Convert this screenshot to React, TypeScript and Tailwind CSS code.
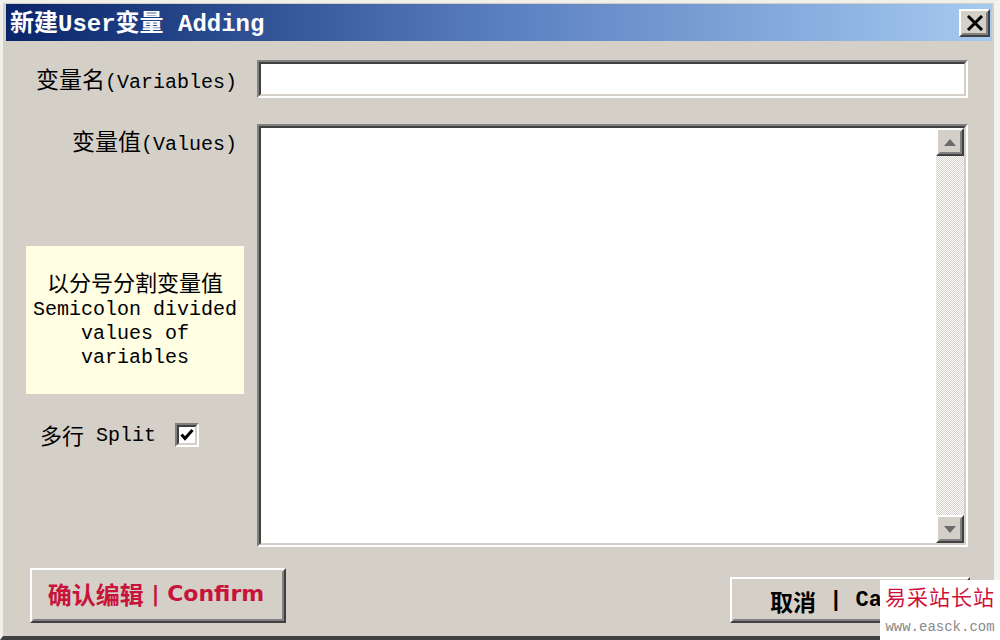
import React from "react";

const CJK = "'Noto Sans CJK SC', sans-serif";
const MONO = "'Liberation Mono', 'Noto Sans CJK SC', monospace";

function Sunken({ className, innerClass, children }: { className?: string; innerClass?: string; children?: React.ReactNode }) {
  return (
    <div className={`border-2 border-t-[#808080] border-l-[#808080] border-b-white border-r-white ${className ?? ""}`}>
      <div className={`h-full w-full border-2 border-t-[#404040] border-l-[#404040] border-b-[#d4d0c8] border-r-[#d4d0c8] ${innerClass ?? ""}`}>
        {children}
      </div>
    </div>
  );
}

function Raised({ className, innerClass, children }: { className?: string; innerClass?: string; children?: React.ReactNode }) {
  return (
    <div className={`border-2 border-t-white border-l-white border-b-[#404040] border-r-[#404040] bg-[#d4d0c8] ${className ?? ""}`}>
      <div className={`h-full w-full border-2 border-t-[#d4d0c8] border-l-[#d4d0c8] border-b-[#808080] border-r-[#808080] ${innerClass ?? ""}`}>
        {children}
      </div>
    </div>
  );
}

export default function App() {
  return (
    <div className="relative w-[1000px] h-[640px] overflow-hidden bg-[#d4d0c8]">
      <div className="flex flex-col w-full h-full border-l-[3px] border-t-[3px] border-l-[#f0efea] border-t-[#f0efea] border-r-[6px] border-r-[#f4f3ef] border-b-[4px] border-b-[#404040] pl-[3px] pt-[1px] pr-[2px]">
        {/* Title bar */}
        <div className="flex items-center h-[37px] bg-gradient-to-r from-[#0a246a] via-[#5a7fc0] to-[#a6caf0] pl-[4px] pr-[2px]">
          <div className="flex items-baseline text-white font-bold leading-none" style={{ fontFamily: MONO }}>
            <span className="text-[24px]" style={{ fontFamily: CJK }}>新建</span>
            <span className="text-[24px]">User</span>
            <span className="text-[24px]" style={{ fontFamily: CJK }}>变量</span>
            <span className="text-[24px]">&nbsp;Adding</span>
          </div>
          <div className="flex-1" />
          <Raised className="w-[31px] h-[28px]" innerClass="flex items-center justify-center">
            <svg width="18" height="16" viewBox="0 0 18 16">
              <path d="M2 1 L16 15 M16 1 L2 15" stroke="#000" strokeWidth="3" />
            </svg>
          </Raised>
        </div>

        {/* Body */}
        <div className="flex flex-col flex-1 pr-[24px]">
          {/* Row 1 */}
          <div className="flex items-center mt-[19px] h-[38px]">
            <div className="w-[251px] flex justify-end pr-[20px] items-baseline text-black">
              <span className="text-[23px]" style={{ fontFamily: CJK }}>变量名</span>
              <span className="text-[20px]" style={{ fontFamily: MONO }}>(Variables)</span>
            </div>
            <Sunken className="flex-1 h-[38px]" innerClass="bg-white" />
          </div>

          {/* Row 2 */}
          <div className="flex mt-[26px] h-[423px]">
            <div className="w-[251px] flex flex-col">
              <div className="flex justify-end pr-[20px] items-baseline mt-[-1px] text-black">
                <span className="text-[23px]" style={{ fontFamily: CJK }}>变量值</span>
                <span className="text-[20px]" style={{ fontFamily: MONO }}>(Values)</span>
              </div>
              <div className="ml-[20px] mr-[13px] mt-[86px] h-[148px] bg-[#fffde2] flex flex-col items-center justify-center text-black pb-[2px]">
                <div className="text-[22px] leading-[26px]" style={{ fontFamily: CJK }}>以分号分割变量值</div>
                <div className="text-[20px] leading-[24px] mt-[4px] text-center" style={{ fontFamily: MONO }}>
                  Semicolon divided
                  <br />
                  values of
                  <br />
                  variables
                </div>
              </div>
              <div className="flex items-center ml-[34px] mt-[24px] text-black">
                <span className="text-[22px]" style={{ fontFamily: CJK }}>多行</span>
                <span className="text-[20px] pt-[3px]" style={{ fontFamily: MONO }}>&nbsp;Split&nbsp;</span>
                <Sunken className="w-[24px] h-[24px] ml-[7px]" innerClass="bg-white flex items-center justify-center">
                  <svg width="14" height="14" viewBox="0 0 14 14">
                    <path d="M1.5 6.5 L5 10.5 L12.5 2" stroke="#000" strokeWidth="3" fill="none" />
                  </svg>
                </Sunken>
              </div>
            </div>
            <Sunken className="flex-1 h-full" innerClass="bg-white flex justify-end">
              <div className="w-[28px] h-full flex flex-col bg-[repeating-conic-gradient(#d4d0c8_0%_25%,#ffffff_0%_50%)] bg-[length:2px_2px]">
                <Raised className="w-[28px] h-[28px]" innerClass="flex items-center justify-center">
                  <svg width="12" height="7" viewBox="0 0 12 7"><path d="M6 0 L12 7 L0 7 Z" fill="#6b6b6b" /></svg>
                </Raised>
                <div className="flex-1" />
                <Raised className="w-[28px] h-[28px]" innerClass="flex items-center justify-center">
                  <svg width="12" height="7" viewBox="0 0 12 7"><path d="M0 0 L12 0 L6 7 Z" fill="#6b6b6b" /></svg>
                </Raised>
              </div>
            </Sunken>
          </div>

          {/* Buttons */}
          <div className="flex items-end justify-between mt-[21px] pl-[24px]">
            <Raised className="w-[256px] h-[55px]" innerClass="flex items-center justify-center pb-[4px] pr-[4px]">
              <div className="flex items-center font-bold text-[#c8143c] leading-none">
                <span className="text-[24px]" style={{ fontFamily: CJK }}>确认编辑</span>
                <span className="text-[22px]" style={{ fontFamily: "'DejaVu Sans', sans-serif" }}>&nbsp;| Confirm</span>
              </div>
            </Raised>
            <Raised className="w-[240px] h-[46px] mr-[-2px]" innerClass="flex items-center pl-[36px] pt-[2px]">
              <div className="flex items-center text-black font-bold leading-none">
                <span className="text-[23px]" style={{ fontFamily: CJK }}>取消</span>
                <span className="text-[22px]" style={{ fontFamily: MONO }}>&nbsp;|&nbsp;Cancel</span>
              </div>
            </Raised>
          </div>
        </div>
      </div>

      {/* Watermark overlay */}
      <div className="absolute left-[880px] top-[580px] w-[120px] h-[60px] bg-white flex flex-col items-center">
        <div className="text-[21px] leading-[32px] h-[32px] text-[#d0103a] tracking-[1px]" style={{ fontFamily: "'Noto Sans CJK SC', serif" }}>易采站长站</div>
        <div className="text-[14px] leading-[20px] mt-[5px] text-[#8a8a8a]" style={{ fontFamily: MONO }}>www.easck.com</div>
      </div>
    </div>
  );
}
